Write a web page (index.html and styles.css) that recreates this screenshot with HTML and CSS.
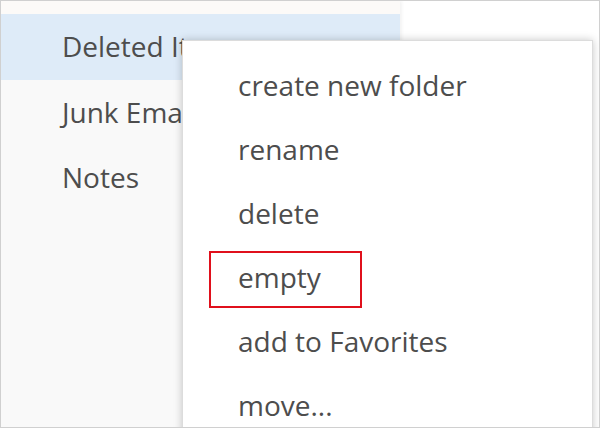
FILE: index.html
```html
<!DOCTYPE html>
<html>
<head>
<meta charset="utf-8">
<link rel="stylesheet" href="styles.css">
</head>
<body>
<div class="frame">
  <div class="pane">
    <div class="pane-top"></div>
    <div class="folder selected">Deleted Items</div>
    <div class="folder">Junk Email</div>
    <div class="folder">Notes</div>
  </div>
  <div class="menu">
    <div class="item">create new folder</div>
    <div class="item">rename</div>
    <div class="item">delete</div>
    <div class="item highlighted">empty<span class="mark"></span></div>
    <div class="item">add to Favorites</div>
    <div class="item">move...</div>
  </div>
</div>
</body>
</html>
```
FILE: styles.css
```css
html, body {
  margin: 0;
  padding: 0;
  background: #ffffff;
}
.frame {
  position: relative;
  width: 600px;
  height: 428px;
  box-sizing: border-box;
  border: 1px solid #d0d0d0;
  overflow: hidden;
  background: #ffffff;
  font-family: "Open Sans", "Noto Sans", sans-serif;
  font-size: 28px;
  color: #4d4d4d;
}
.pane {
  width: 399px;
  height: 100%;
  background: #f9f9f9;
  box-shadow: 2px 0 3px rgba(0, 0, 0, 0.05);
  display: flex;
  flex-direction: column;
}
.pane-top {
  height: 13px;
  background: #fcfaf8;
}
.folder {
  height: 65px;
  line-height: 65px;
  padding-left: 61px;
  white-space: nowrap;
  overflow: hidden;
}
.folder.selected {
  background: #deebf8;
  height: 66px;
}
.menu {
  position: absolute;
  left: 181px;
  top: 39px;
  width: 411px;
  height: 420px;
  background: #ffffff;
  border: 1px solid #dcdcdc;
  box-shadow: 0 0 8px rgba(0, 0, 0, 0.22);
  padding-top: 12px;
  box-sizing: border-box;
}
.item {
  position: relative;
  height: 64px;
  line-height: 64px;
  padding-left: 55px;
  white-space: nowrap;
}
.mark {
  position: absolute;
  left: 26px;
  top: 6px;
  width: 153px;
  height: 57px;
  box-sizing: border-box;
  border: 2px solid #e0101c;
}
```
